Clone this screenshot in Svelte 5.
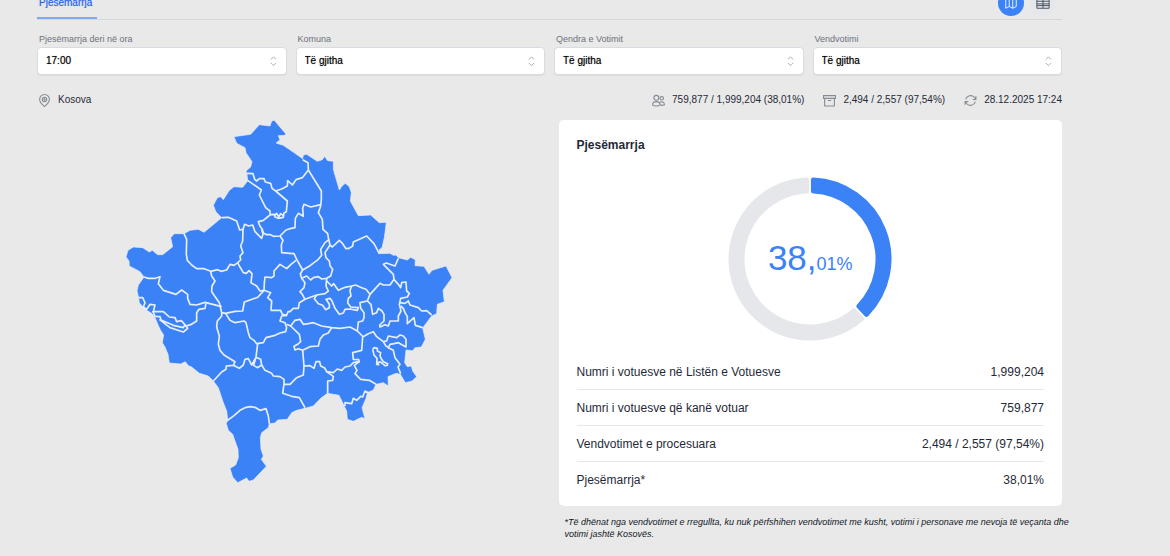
<script lang="ts">
  type Filter = { id: string; label: string; options: string[] };

  const filters: Filter[] = [
    { id: "hour", label: "Pjesëmarrja deri në ora", options: ["17:00"] },
    { id: "municipality", label: "Komuna", options: ["Të gjitha"] },
    { id: "center", label: "Qendra e Votimit", options: ["Të gjitha"] },
    { id: "station", label: "Vendvotimi", options: ["Të gjitha"] },
  ];

  const rows = [
    ["Numri i votuesve në Listën e Votuesve", "1,999,204"],
    ["Numri i votuesve që kanë votuar", "759,877"],
    ["Vendvotimet e procesuara", "2,494 / 2,557 (97,54%)"],
    ["Pjesëmarrja*", "38,01%"],
  ];

  const turnout = 0.3801;

  // Ring segment between two fractions of the circle. The shape is inset by
  // the stroke, whose round joins give the soft corners.
  function segment(from: number, to: number) {
    const outer = 79;
    const inner = 68;
    const inset = 3.4;
    const point = (radius: number, fraction: number, side: number) => {
      const angle = fraction * 2 * Math.PI + (side * inset) / radius;
      return `${radius * Math.sin(angle)} ${-radius * Math.cos(angle)}`;
    };
    const large = to - from > 0.5 ? 1 : 0;
    return (
      `M${point(outer, from, 1)} A${outer} ${outer} 0 ${large} 1 ${point(outer, to, -1)} ` +
      `L${point(inner, to, -1)} A${inner} ${inner} 0 ${large} 0 ${point(inner, from, 1)}Z`
    );
  }

  const outline =
    "342,77 392,70 418,41 450,45 455,30 463,28 497,68 495,73 475,74 480,87 468,96 490,103 525,127 548,143 550,132 560,130 592,151 607,146 614,136 623,149 640,151 640,175 658,237 666,225 676,217 688,227 694,245 691,270 715,314 752,312 778,335 799,334 793,380 786,410 778,416 778,428 810,427 820,433 828,432 835,440 862,447 872,439 886,446 885,464 912,466 927,490 936,478 978,465 996,500 969,538 973,572 952,580 950,608 935,615 922,632 908,651 916,685 904,708 885,710 878,719 858,717 854,755 862,767 874,765 878,780 890,797 876,810 856,815 841,790 828,787 804,797 805,825 790,815 768,820 760,837 742,845 738,862 726,890 735,923 725,919 700,931 682,925 680,900 657,853 622,847 602,862 580,885 555,892 530,898 515,905 502,925 473,927 465,936 448,938 445,950 425,965 421,980 423,1015 430,1035 424,1045 439,1066 400,1107 387,1111 380,1101 353,1115 338,1098 330,1072 347,1062 355,1040 354,1015 338,970 325,958 319,938 323,925 320,900 310,875 295,830 280,810 265,795 238,787 215,768 205,764 196,752 182,759 148,756 144,730 135,708 127,695 131,672 120,655 105,620 95,607 75,595 58,575 56,560 51,540 55,522 72,498 60,482 28,465 27,450 18,438 24,418 40,408 68,410 88,423 97,418 113,431 128,431 158,407 152,380 163,368 192,368 210,358 235,355 252,364 275,345 305,320 288,303 280,283 292,260 302,257 310,266 328,238 342,227 368,229 383,210 381,190 378,180 392,168 396,152 378,125 375,110 350,97";

  const borders = [
    "381,187 399,188 404,205 410,210 418,203 432,203 436,213 452,217 456,232 467,240 485,234 502,225 503,209 517,222 528,206 547,200 565,177 564,155 548,146",
    "383,208 424,237 418,252 437,290 450,300 450,312 430,328 415,332 420,346 427,355 430,366 440,371 451,371 461,376 480,375 498,357 510,353 525,350 526,322 535,307 550,316 548,292 552,280 572,288 602,281",
    "467,240 502,270 499,302 492,306 490,319 475,322 465,318 463,310 450,311",
    "463,314 470,307 476,318 482,308 490,314",
    "565,177 604,240 604,265 602,285 595,305 607,325 609,355 623,368 626,385 630,402 637,408 658,388 668,398 678,413 687,412 698,405 700,393 740,375 762,398 778,428",
    "305,320 325,319 350,330 359,357 369,355 374,340 386,345 398,342 405,362 425,382 429,370 425,355",
    "369,355 368,390 362,405 369,425 360,435 362,447 353,455 342,463 330,460 320,477 303,481 293,476 272,481 265,478 252,473 230,473 215,462 202,448 199,430 200,385 192,368",
    "353,455 358,465 370,485 379,487 387,479 396,488 393,515 410,525 420,540 432,538 433,516 435,498 455,500 462,495 462,480 480,460 500,473 513,460 528,448",
    "480,375 489,388 484,402 485,425 510,427 522,428 530,445 548,477 570,464 595,445 605,433 602,415 615,395 628,385",
    "630,402 615,425 618,440 628,450 630,464 638,475 632,495 620,502 605,504 595,497 580,500 572,507 560,495 545,502 541,489 548,477",
    "545,502 555,515 552,530 540,542 547,550 555,565 590,552 615,548 625,540 618,525 620,502",
    "620,510 635,525 641,518 655,538 675,529 695,525 707,522 725,530 738,535 750,550 742,570 720,575 722,592 732,605 732,620 728,630 715,633 712,660",
    "695,525 690,538 693,555 685,562 683,575 692,588 715,590 712,598 690,594 675,595 670,606 658,610 645,592 636,570 630,562 618,565 628,580 628,590 617,596 608,583 595,578 583,563 590,552",
    "750,550 780,517 790,522 810,522 822,505 820,490 790,460 799,456 825,465 835,442",
    "822,505 835,520 842,530 845,515 858,513 860,540 868,547 862,558 842,562 838,580 843,600 835,615 835,630 810,630 805,645 795,641 780,648 779,642 792,630 792,610 786,600 775,592 770,605 758,610 753,580 742,570",
    "838,575 855,577 865,570 870,582 895,590 905,600 920,599 935,612",
    "842,585 850,592 855,605 862,617 862,638 882,620 886,643 908,650",
    "555,565 538,575 535,592 520,592 510,602 504,602 500,613 487,610 482,598 453,598 455,570 443,560 452,545 432,538 414,558 410,560 373,573 368,600 345,601 317,607",
    "500,613 485,615 480,630 495,635 500,650 497,662 480,666 465,673 438,680 430,695 410,698 402,688 390,680 385,665 378,635 372,630 345,635 330,628 317,607 305,605 298,575 275,542 276,525 285,510 275,495 272,481",
    "500,640 512,645 525,628 540,625 550,640 565,638 580,635 605,645 635,650 660,652 690,648 712,660 730,678",
    "635,650 625,666 610,672 600,685 595,705 570,707 548,718 535,713 525,717 522,706 533,700 542,692 538,670 512,645",
    "72,498 85,502 106,502 120,497 115,518 130,538 168,550 185,537 203,550 203,562 210,580 230,582 255,574 305,587",
    "56,560 68,560 75,575 70,588 80,595 90,580 105,582 100,602 130,602 148,618 165,620 170,632 184,629 198,645 212,641 230,630 230,605 237,595 255,592 258,577",
    "98,600 105,616 120,617 123,627 160,643 190,650 195,641 203,652 190,663 150,650 118,625",
    "305,605 305,615 292,630 290,645 292,655 298,675 295,700 300,718 312,732 345,752 340,763 319,765 318,775 305,783 280,810",
    "340,763 358,772 370,762 375,745 385,743 395,762 408,739 422,745 425,762 412,770 401,763 408,739 413,698",
    "425,762 435,778 455,787 460,795 480,797 492,805 492,820 510,820 530,800 550,792 552,765 548,718",
    "492,820 488,847 515,856 538,860 555,890",
    "320,930 342,914 360,898 375,890 390,887 405,889 420,898 438,893 445,915 448,938",
    "552,765 570,764 582,772 588,752 599,752 602,765 614,771 620,782 640,785 652,774 665,778 675,768 690,765 700,755 718,752 716,746 700,745 698,725 725,718 728,678 745,668 760,662 770,677 790,692 800,690 805,675 830,680 840,672 850,675 858,685 858,708 835,695 822,698 810,700 805,710 797,704 790,692",
    "620,782 640,796 638,808 623,810 623,847",
    "718,752 703,763 711,778 705,788 722,805 748,808 768,820",
    "805,710 820,718 825,740 840,760 834,768 842,788",
    "675,885 675,875 695,878 700,862 710,868 722,856 728,858 735,840 745,845",
    "758,715 762,710 772,712 772,720 782,725 780,735 785,745 790,752 803,758 802,763 795,764 780,752 773,755 776,761 770,760 771,742 762,732 758,715",
  ];
</script>

<main>
  <header>
    <nav>
      <a class="tab" href="#turnout">Pjesëmarrja</a>
    </nav>
    <div class="views">
      <button class="view active" aria-label="Harta">
        <svg viewBox="0 0 16 16"><path d="M2 4 6 2v10l-4 2Zm4-2 4 2v10l-4-2m4-8 4-2v10l-4 2" /></svg>
      </button>
      <button class="view" aria-label="Tabela">
        <svg viewBox="0 0 16 16"><path d="M1 3h14v11H1ZM1 6h14M1 9h14M1 11h14M8 3v11" /></svg>
      </button>
    </div>
  </header>

  <form class="filters">
    {#each filters as filter}
      <div class="filter">
        <label for={filter.id}>{filter.label}</label>
        <div class="control">
          <select id={filter.id}>
            {#each filter.options as option}
              <option>{option}</option>
            {/each}
          </select>
          <svg viewBox="0 0 8 12"><path d="M1 4 4 1l3 3M1 8l3 3 3-3" /></svg>
        </div>
      </div>
    {/each}
  </form>

  <div class="status">
    <span class="item place">
      <svg viewBox="0 0 24 24">
        <circle cx="12" cy="10" r="4" />
        <circle cx="12" cy="10" r="1" />
        <path d="M12 23c-2-2-9-7-9-13a9 9 0 0 1 18 0c0 6-7 11-9 13Z" />
      </svg>
      Kosova
    </span>
    <span class="item">
      <svg viewBox="0 0 24 24">
        <circle cx="8" cy="7" r="4.5" />
        <circle cx="18" cy="8" r="3.2" />
        <path d="M1 20c0-4 3-6 7-6s7 2 7 6c-3 3-11 3-14 0Zm15 1c3 0 5 0 7-1 0-6-5-7-9-4" />
      </svg>
      759,877 / 1,999,204 (38,01%)
    </span>
    <span class="item">
      <svg viewBox="0 0 24 24">
        <path d="M1 3h22v5H1ZM3 8v14h18V8M9 12h6" />
      </svg>
      2,494 / 2,557 (97,54%)
    </span>
    <span class="item">
      <svg viewBox="0 0 24 24">
        <path d="M22 4v6h-6M2 20v-6h6M3 10a9.5 9.5 0 0 1 16-4l3 4M2 14l3 4a9.5 9.5 0 0 0 16-4" />
      </svg>
      28.12.2025 17:24
    </span>
  </div>

  <div class="content">
    <div class="map">
      <svg viewBox="-3 27 1020 1095" role="img" aria-label="Kosova">
        <polygon points={outline} />
        {#each borders as points}
          <polyline {points} />
        {/each}
      </svg>
    </div>

    <section id="turnout">
      <div class="card">
        <h2>Pjesëmarrja</h2>
        <div class="chart">
          <svg viewBox="-82 -82 164 164">
            <path class="rest" d={segment(turnout, 1)} />
            <path class="voted" d={segment(0, turnout)} />
          </svg>
          <p>38,<small>01%</small></p>
        </div>
        <table>
          <tbody>
            {#each rows as [name, value]}
              <tr>
                <th scope="row">{name}</th>
                <td>{value}</td>
              </tr>
            {/each}
          </tbody>
        </table>
      </div>
      <p class="note">
        *Të dhënat nga vendvotimet e rregullta, ku nuk përfshihen vendvotimet me kusht, votimi i
        personave me nevoja të veçanta dhe votimi jashtë Kosovës.
      </p>
    </section>
  </div>
</main>

<style>
  :global(body) {
    background: #e9e9e9;
  }

  main {
    padding: 0 108px 12px 37px;
    font: 10px/14px "Liberation Sans", Arial, sans-serif;
    color: #1f2937;
  }

  svg {
    fill: none;
    stroke: currentColor;
  }

  header {
    display: flex;
    justify-content: space-between;
    height: 31px;
    margin-top: -12px;
    border-bottom: 1px solid #d6d7d9;
  }

  nav {
    display: flex;
  }

  .tab {
    padding: 8px 5px 0 2px;
    border-bottom: 2px solid #7fa8f5;
    color: #2563eb;
    text-decoration: none;
    text-shadow: 0 0 1px #2563eb80;
  }

  .views {
    display: flex;
    gap: 6px;
    padding: 2px 6px 0 0;
  }

  .view {
    display: grid;
    place-items: center;
    width: 26px;
    height: 26px;
    padding: 0;
    border: 0;
    border-radius: 50%;
    background: #e6e7ea;
    color: #374151;
  }

  .view.active {
    background: #3b82f6;
    color: #fff;
  }

  .view svg {
    width: 14px;
  }

  .filters {
    display: grid;
    grid-template-columns: repeat(4, 1fr);
    gap: 9px;
    padding-top: 12px;
  }

  label {
    display: block;
    padding: 0 2px 1px;
    font-size: 9px;
    color: #6b7280;
  }

  .control {
    display: grid;
    align-items: center;
  }

  .control > * {
    grid-area: 1 / 1;
  }

  .control svg {
    justify-self: end;
    width: 7px;
    margin-right: 10px;
    color: #9ca3af;
    pointer-events: none;
  }

  select {
    appearance: none;
    width: 100%;
    height: 28px;
    padding: 0 24px 0 8px;
    border: 1px solid #d9dbe2;
    border-radius: 4px;
    background: #fff;
    box-shadow: 0 1px 1px #0000000d;
    color: #000;
    font: inherit;
    text-shadow: 0 0 1px #00000080;
  }

  .status {
    display: flex;
    gap: 19px;
    padding: 18px 0 13px;
  }

  .item {
    display: flex;
    align-items: center;
    gap: 7px;
  }

  .item svg {
    width: 13px;
    color: #858b95;
    stroke-width: 2;
  }

  .place {
    margin-right: auto;
    padding-left: 1px;
  }

  .content {
    display: grid;
    grid-template-columns: 1fr 1fr;
    gap: 18px;
  }

  .map svg {
    display: block;
    width: 100%;
    max-width: 340px;
    margin: 0 auto;
    stroke: #e8effc;
    stroke-width: 5;
    stroke-linejoin: round;
  }

  .map polygon {
    fill: #3b82f6;
    stroke-width: 2;
  }

  .card {
    padding: 17px 18px 9px;
    border-radius: 5px;
    background: #fff;
  }

  h2 {
    margin: 0;
    font-size: 12px;
    line-height: 16px;
  }

  .chart {
    display: grid;
    place-items: center;
    padding: 24px 0 13px;
  }

  .chart > * {
    grid-area: 1 / 1;
  }

  .chart svg {
    width: 164px;
    stroke-width: 5;
    stroke-linejoin: round;
  }

  .rest {
    fill: #e5e7eb;
    stroke: #e5e7eb;
  }

  .voted {
    fill: #3b82f6;
    stroke: #3b82f6;
  }

  .chart p {
    margin: 0;
    padding-top: 4px;
    color: #3b82f6;
    font-size: 35px;
    line-height: 40px;
  }

  small {
    font-size: 18px;
  }

  table {
    width: 100%;
    border-collapse: collapse;
    font-size: 12px;
  }

  th,
  td {
    height: 35px;
    padding: 0;
    font-weight: normal;
    text-align: left;
  }

  td {
    text-align: right;
  }

  tr + tr {
    border-top: 1px solid #e5e7eb;
  }

  .note {
    margin: 10px -12px 0 6px;
    font-size: 9px;
    line-height: 12px;
    font-style: italic;
    color: #111827;
  }
</style>
